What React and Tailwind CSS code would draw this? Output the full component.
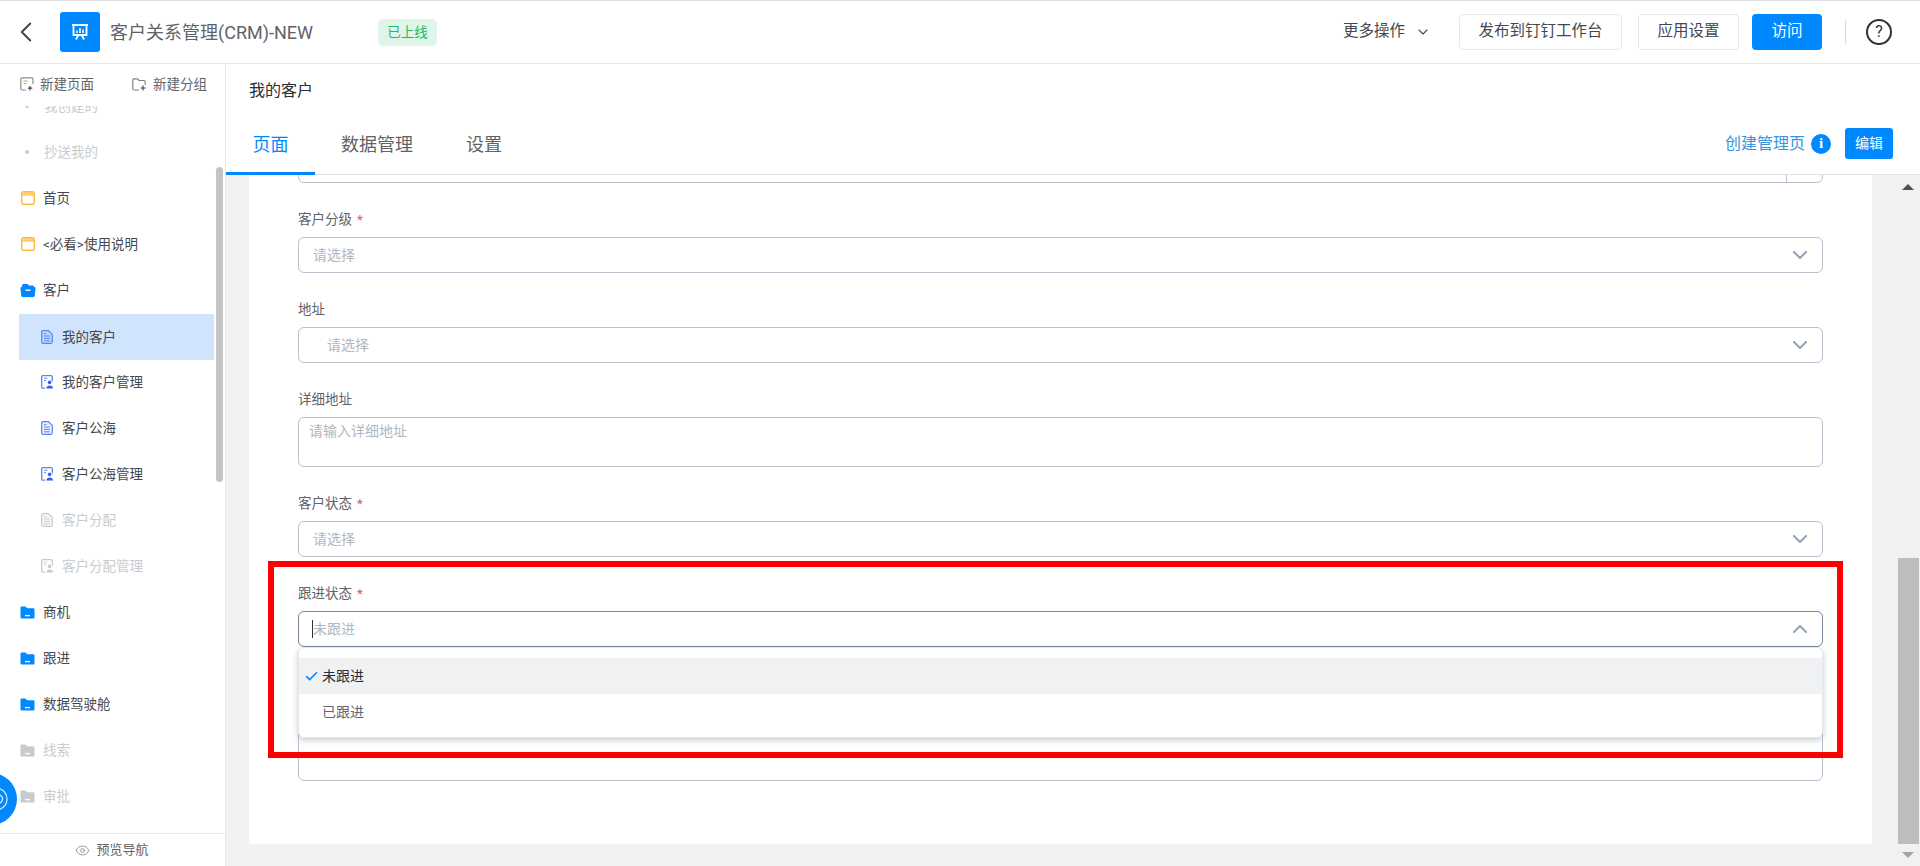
import { Check, ChevronDown, ChevronLeft, ChevronUp, Eye } from 'lucide-react';

const FONT = "font-['Roboto','Noto_Sans_CJK_SC',sans-serif]";

function WindowIcon() {
  return (
    <svg width="14" height="14" viewBox="0 0 15 15" className="shrink-0">
      <rect x="0.8" y="0.8" width="13.4" height="13.4" rx="2" fill="#fff" stroke="#ffb938" strokeWidth="1.5" />
      <rect x="1" y="1" width="13" height="4" fill="#ffc862" />
      <path d="M2.5 3h1M5 3h1M7.5 3h1" stroke="#fff" strokeWidth="1" />
    </svg>
  );
}

function FolderIcon({ color = '#0089ff', open = false }) {
  if (open) {
    return (
      <svg width="16" height="15" viewBox="0 0 16 15" className="shrink-0">
        <path d="M2 2.5C2 1.500 3 1 4 1h3.500l1.500 1.500h3.500c1 0 1.500.5 1.500 1.500H2z" fill={color} />
        <path d="M.5 5.200C.5 4.500 1 4 1.700 4h12.600c.7 0 1.200.5 1.200 1.200l-.7 7.300c-.1 1-1 1.500-1.800 1.500H3c-.8 0-1.700-.5-1.800-1.500L.5 5.200z" fill={color} />
        <path d="M5.500 7.200h5" stroke="#fff" strokeWidth="1.400" />
      </svg>
    );
  }
  return (
    <svg width="15" height="13" viewBox="0 0 15 13" className="shrink-0">
      <path d="M0.5 1.800C0.5 1 1.100.5 1.800.5h3.700l1.700 1.800h6c.7 0 1.300.6 1.300 1.300v7.600c0 .7-.6 1.300-1.300 1.300H1.800c-.7 0-1.300-.6-1.300-1.300V1.800z" fill={color} />
      <path d="M5 9.600h5" stroke="#fff" strokeWidth="1.400" />
    </svg>
  );
}

function DocIcon({ color = '#5b83f7' }) {
  return (
    <svg width="12" height="14" viewBox="0 0 12 14" className="shrink-0" fill="none">
      <path d="M1.800.7h5.600l3.900 3.700v7.200c0 1-.6 1.700-1.500 1.700H1.800C1.100 13.300.7 12.700.7 12V1.800C.7 1.200 1.100.7 1.800.7z" fill={color} fillOpacity="0.14" stroke={color} strokeWidth="1.200" />
      <path d="M3 6h5.800M3 8.400h5.800M3 10.800h5.800M3 3.600h2.400" stroke={color} strokeWidth="1" />
    </svg>
  );
}

function DocUserIcon({ color = '#5b83f7', dark = '#2f62f2' }) {
  return (
    <svg width="13" height="14" viewBox="0 0 13 14" className="shrink-0" fill="none">
      <path d="M4 13.200H1.800c-.7 0-1.100-.5-1.100-1.200V1.800C.7 1.200 1.100.7 1.800.7h8.400c.7 0 1.100.5 1.100 1.100v4.500" stroke={color} strokeWidth="1.300" />
      <path d="M3 3.200h3.400M3 5.600h2" stroke={color} strokeWidth="1" />
      <circle cx="8.600" cy="7.400" r="1.800" fill={dark} />
      <path d="M5.400 13.400c0-2 1.300-3 3.200-3s3.400 1 3.400 3z" fill={dark} />
    </svg>
  );
}

const NAV = [
  { label: '我创建的', kind: 'dot', muted: true },
  { label: '抄送我的', kind: 'dot', muted: true },
  { label: '首页', kind: 'window' },
  { label: '<必看>使用说明', kind: 'window' },
  { label: '客户', kind: 'open' },
  { label: '我的客户', kind: 'doc', active: true },
  { label: '我的客户管理', kind: 'docuser' },
  { label: '客户公海', kind: 'doc' },
  { label: '客户公海管理', kind: 'docuser' },
  { label: '客户分配', kind: 'doc', muted: true },
  { label: '客户分配管理', kind: 'docuser', muted: true },
  { label: '商机', kind: 'folder' },
  { label: '跟进', kind: 'folder' },
  { label: '数据驾驶舱', kind: 'folder' },
  { label: '线索', kind: 'folder', muted: true },
  { label: '审批', kind: 'folder', muted: true },
];

function NavRow({ item }) {
  const nested = item.kind === 'doc' || item.kind === 'docuser';
  const gray = '#c8cacd';
  return (
    <div
      className={`h-[46px] w-[195px] ml-[19px] flex items-center text-[13.5px] ${nested ? 'pl-[22px] gap-[9px]' : 'gap-[8px]'} ${item.active ? 'bg-[#d0e5fd] mt-[1px] -mb-[1px]' : ''} ${item.muted ? 'text-[#c9cbce]' : 'text-[#44484e]'}`}
    >
      {item.kind === 'dot' && <span className="ml-[6px] mr-[7px] w-[4px] h-[4px] rounded-full bg-[#c9cbce]" />}
      {item.kind === 'window' && <span className="ml-[2px]"><WindowIcon /></span>}
      {item.kind === 'open' && <span className="ml-[1px] -mr-[1px]"><FolderIcon open /></span>}
      {item.kind === 'folder' && <span className="ml-[1px]"><FolderIcon color={item.muted ? gray : '#0089ff'} /></span>}
      {item.kind === 'doc' && <DocIcon color={item.muted ? gray : '#5b83f7'} />}
      {item.kind === 'docuser' && <span className="-mr-[1px]"><DocUserIcon color={item.muted ? gray : '#5b83f7'} dark={item.muted ? gray : '#2f62f2'} /></span>}
      <span className="whitespace-nowrap">{item.label}</span>
    </div>
  );
}

function Sidebar() {
  return (
    <aside className="relative w-[226px] shrink-0 flex flex-col border-r border-[#e8e9ec] bg-white">
      <div className="relative z-10 h-[42px] shrink-0 flex items-center pb-[2px] pl-[20px] bg-white text-[13.5px] text-[#5f6368]">
        <svg width="14" height="14" viewBox="0 0 14 14" fill="none" className="mr-[6px]">
          <path d="M6 13H2c-.7 0-1.200-.5-1.200-1.200V2C.8 1.300 1.300.8 2 .8h9.800c.7 0 1.200.5 1.200 1.200v5" stroke="#8a8d92" strokeWidth="1.200" />
          <path d="M3.500 4h4M3.500 6.500h2.500" stroke="#d9953f" strokeWidth="1" />
          <path d="M10 9v4.500M7.800 11.200h4.500" stroke="#44484e" strokeWidth="1.200" />
        </svg>
        <span>新建页面</span>
        <svg width="15" height="13" viewBox="0 0 15 13" fill="none" className="ml-[38px] mr-[6px]">
          <path d="M7 12H2c-.7 0-1.200-.5-1.200-1.200V2C.8 1.300 1.300.8 2 .8h3.500L7 2.500h5c.7 0 1.200.5 1.200 1.200v3" stroke="#7d8186" strokeWidth="1.200" />
          <path d="M11 7.500v5M8.600 10h5" stroke="#44484e" strokeWidth="1.200" />
        </svg>
        <span>新建分组</span>
      </div>
      <div className="flex-1 overflow-hidden">
        <div className="-mt-[23px]">
          {NAV.map((item) => (
            <NavRow key={item.label} item={item} />
          ))}
        </div>
      </div>
      <div className="relative z-10 h-[33px] shrink-0 border-t border-[#e8e9ec] bg-white flex items-center justify-center gap-[6px] pr-[1px] text-[13px] text-[#5f6368]">
        <Eye size={15} strokeWidth={1.4} className="text-[#85888d]" />
        <span>预览导航</span>
      </div>
      {/* sidebar scrollbar thumb */}
      <div className="absolute left-[216px] top-[103px] w-[7px] h-[315px] rounded-[4px] bg-[#c4c4c4]" />
      {/* floating blue handle */}
      <div className="absolute z-20 -left-[35px] top-[709px] w-[52px] h-[52px] rounded-full bg-[#0089ff] flex items-center justify-end pr-[9px]">
        <svg width="10" height="26" viewBox="0 0 10 26" fill="none" stroke="#cfe7ff" strokeWidth="1.3">
          <path d="M0 2c6 2 9 6 9 11s-3 9-9 11" />
          <path d="M0 8c3 1 4.500 3 4.500 5s-1.500 4-4.500 5" />
        </svg>
      </div>
    </aside>
  );
}

function Select({ placeholder, inset = false, focused = false, caret = false }) {
  const Arrow = focused ? ChevronUp : ChevronDown;
  return (
    <div
      className={`h-[36px] rounded-[6px] border flex items-center justify-between pr-[10px] ${focused ? 'border-[#7b8799]' : 'border-[#b9c0cc]'} ${inset ? 'pl-[28px]' : 'pl-[14px]'}`}
    >
      <span className="flex items-center text-[14px] text-[#b2b6bd]">
        {caret && <span className="w-px h-[18px] bg-[#30343a] -ml-[1px]" />}
        {placeholder}
      </span>
      <Arrow size={24} strokeWidth={2.2} className="text-[#9aa6b6]" />
    </div>
  );
}

function Field({ label, required, children }) {
  return (
    <div className="mt-[26px]">
      <div className="h-[20px] mb-[8px] flex items-center text-[13.5px] text-[#5f6368]">
        {label}
        {required && <span className="ml-[5px] text-[#f24e4e]">*</span>}
      </div>
      {children}
    </div>
  );
}

function FollowDropdown() {
  return (
    <div className="absolute z-10 left-0 right-0 top-[36px] h-[91px] pt-[10px] rounded-[6px] bg-white border border-[#e4e7ec] shadow-[0_2px_6px_rgba(90,105,130,0.35)] text-[14px]">
      <div className="h-[36px] bg-[#f0f1f3] flex items-center pl-[5px] text-[#2a2d33]">
        <Check size={15} strokeWidth={2.6} className="text-[#0089ff] mr-[3px]" />
        未跟进
      </div>
      <div className="h-[36px] flex items-center pl-[23px] text-[#5f6670]">已跟进</div>
    </div>
  );
}

function Watermark() {
  const marks = Array.from({ length: 170 }, (_, i) => i);
  return (
    <div className="absolute inset-0 z-30 pointer-events-none overflow-hidden grid grid-cols-[repeat(17,112px)] auto-rows-[92px] pl-[10px] pt-[70px]">
      {marks.map((i) => (
        <span key={i} className="-rotate-[16deg] text-[13px] text-black/[0.012] whitespace-nowrap">
          徐嘉69 YK
        </span>
      ))}
    </div>
  );
}

export default function App() {
  return (
    <div className={`relative h-screen w-full overflow-hidden flex flex-col bg-white ${FONT}`}>
      {/* top bar */}
      <header className="h-[64px] shrink-0 flex items-center border-t border-t-[#dfe0e4] border-b border-b-[#e8e9ec]">
        <ChevronLeft size={34} strokeWidth={1.3} className="ml-[9px] text-[#3d4045]" />
        <div className="ml-[17px] w-[40px] h-[40px] rounded-[3px] bg-[#0089ff] flex items-center justify-center">
          <svg width="18" height="17" viewBox="0 0 18 17" fill="none">
            <path d="M1 1h16M2.500 1v10h13V1" stroke="#fff" strokeWidth="1.8" />
            <path d="M6 9V6.500M9 9V4M12 9V5.500" stroke="#fff" strokeWidth="1.5" />
            <path d="M7 11.500l-2 4M11 11.500l2 4" stroke="#fff" strokeWidth="1.8" />
          </svg>
        </div>
        <span className="ml-[10px] text-[18px] text-[#5f6368] whitespace-nowrap">客户关系管理(CRM)-NEW</span>
        <span className="ml-[65px] w-[59px] h-[27px] rounded-[5px] bg-[#def5e8] flex items-center justify-center text-[13.5px] text-[#1fb868]">已上线</span>
        <div className="ml-auto flex items-center">
          <span className="text-[15.5px] text-[#44484e]">更多操作</span>
          <ChevronDown size={16} strokeWidth={1.6} className="ml-[10px] text-[#44484e]" />
          <button className="ml-[28px] w-[163px] h-[36px] rounded-[4px] border border-[#e6e7ea] text-[15.5px] text-[#44484e]">发布到钉钉工作台</button>
          <button className="ml-[16px] w-[101px] h-[36px] rounded-[4px] border border-[#e6e7ea] text-[15.5px] text-[#44484e]">应用设置</button>
          <button className="ml-[13px] w-[70px] h-[36px] rounded-[4px] bg-[#0089ff] text-[15.5px] text-white">访问</button>
          <span className="ml-[23px] w-px h-[24px] bg-[#d8dade]" />
          <span className="ml-[20px] mr-[28px] w-[26px] h-[26px] rounded-full border-2 border-[#2d3035] flex items-center justify-center text-[16px] text-[#2d3035]">?</span>
        </div>
      </header>

      <div className="flex-1 min-h-0 flex">
        <Sidebar />

        <main className="flex-1 min-w-0 flex flex-col">
          <div className="h-[54px] shrink-0 flex items-center pl-[23px] text-[16px] text-[#2a2d33]">我的客户</div>
          <div className="h-[57px] shrink-0 flex border-b border-[#e2e4ea]">
            <span className="h-[57px] w-[89px] text-center pt-[13px] border-b-[3px] border-[#0089ff] text-[18px] text-[#0089ff]">页面</span>
            <span className="px-[26px] pt-[13px] text-[18px] text-[#5f6368]">数据管理</span>
            <span className="px-[27px] pt-[13px] text-[18px] text-[#5f6368]">设置</span>
            <div className="ml-auto flex items-center pb-[5px]">
              <span className="text-[16px] text-[#3b93e0]">创建管理页</span>
              <span className="ml-[6px] w-[20px] h-[20px] rounded-full bg-[#0089ff] flex items-center justify-center font-['Liberation_Serif',serif] font-bold text-[15px] text-white">i</span>
              <button className="ml-[14px] w-[48px] h-[31px] rounded-[3px] bg-[#0089ff] text-[14px] text-white">编辑</button>
              <span className="w-[27px]" />
            </div>
          </div>

          <div className="flex-1 min-h-0 flex bg-[#f1f2f4]">
            <div className="flex-1 min-w-0 pl-[23px] pr-[24px] pb-[22px]">
              <div className="relative h-full bg-white pl-[49px] pr-[49px] overflow-hidden">
                <div className="h-[36px] -mt-[28px] rounded-[6px] border border-[#b9c0cc] flex justify-end pr-[35px]">
                  <span className="w-px h-full bg-[#b9c0cc]" />
                </div>
                <Field label="客户分级" required>
                  <Select placeholder="请选择" />
                </Field>
                <Field label="地址">
                  <Select placeholder="请选择" inset />
                </Field>
                <Field label="详细地址">
                  <div className="h-[50px] rounded-[6px] border border-[#b9c0cc] px-[10px] pt-[3px] text-[14px] text-[#b2b6bd]">请输入详细地址</div>
                </Field>
                <Field label="客户状态" required>
                  <Select placeholder="请选择" />
                </Field>
                <Field label="跟进状态" required>
                  <div className="relative">
                    <Select placeholder="未跟进" focused caret />
                    <FollowDropdown />
                  </div>
                </Field>
                <Field>
                  <div className="h-[80px] rounded-[6px] border border-[#b9c0cc]" />
                </Field>
                {/* red annotation box */}
                <div className="absolute z-20 left-[19px] top-[386px] w-[1575px] h-[197px] border-[6px] border-[#ff0000]" />
              </div>
            </div>

            {/* page scrollbar */}
            <div className="w-[24px] shrink-0 bg-[#f1f1f1] flex flex-col items-center">
              <span className="mt-[9px] border-x-[6px] border-x-transparent border-b-[6px] border-b-[#505050]" />
              <div className="flex-1" />
              <div className="w-[21px] h-[286px] bg-[#bdbdbd] ml-[1px]" />
              <span className="mt-[8px] mb-[8px] border-x-[6px] border-x-transparent border-t-[6px] border-t-[#a3a3a3]" />
            </div>
          </div>
        </main>
      </div>
      <Watermark />
    </div>
  );
}
